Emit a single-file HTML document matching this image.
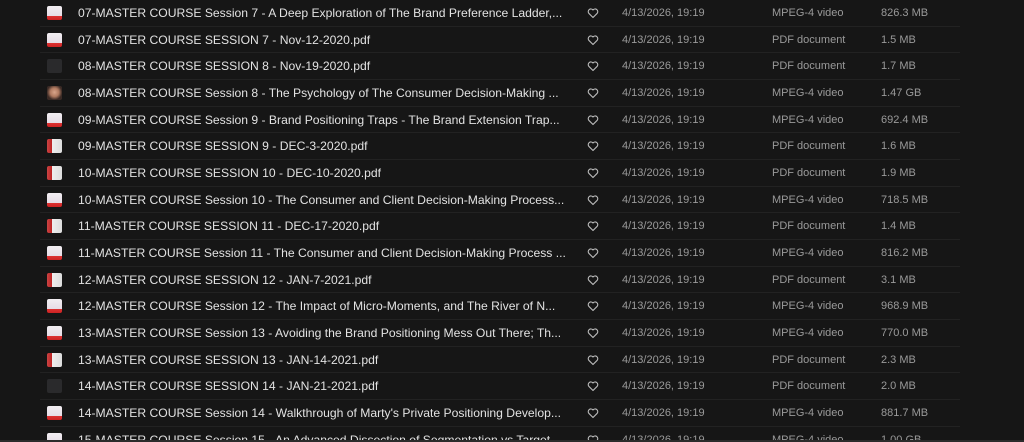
<!DOCTYPE html>
<html><head><meta charset="utf-8"><style>
*{margin:0;padding:0;box-sizing:border-box}
html,body{width:1024px;height:442px;overflow:hidden}
body{background:#161616;position:relative;font-family:"Liberation Sans",Arial,sans-serif}
.r{position:absolute;left:0;width:1024px;height:26.67px}
.r::after{content:"";position:absolute;left:40px;width:920px;bottom:0;height:1px;background:#222}
.t{position:absolute;left:47px;top:6px;width:15px;height:14px;border-radius:2px;background:linear-gradient(#f2eef2 0,#e6dde6 70%,#d33 70%,#c22 100%)}
.t.d{background:#2a2a2c}
.t.p{background:linear-gradient(90deg,#c44 0,#b22 35%,#eee 35%,#ddd 100%)}
.t.f{background:radial-gradient(circle at 50% 45%,#d9a58a 0,#b07a60 40%,#3a2a25 70%)}
.n{position:absolute;left:78px;top:6px;font-size:12.15px;color:#e2e2e2;white-space:nowrap}
.h{position:absolute;left:587px;top:7px;width:12px;height:12px}
.c{position:absolute;top:7px;font-size:11px;color:#9a9a9a;white-space:nowrap}
.a{left:622px}.b{left:772px}.s{left:881px}
.bar{position:absolute;left:0;top:440px;width:1024px;height:2px;background:#2b2b2b}
</style></head><body>
<svg width="0" height="0" style="position:absolute"><defs><symbol id="hh" viewBox="0 0 12 12"><path d="M6 10.5 L1.8 6.3 A2.4 2.4 0 0 1 6 3 A2.4 2.4 0 0 1 10.2 6.3 Z" fill="none" stroke="#bbb" stroke-width="1.1" stroke-linejoin="round"/></symbol></defs></svg>

<div class="r" style="top:0"><div class="t"></div><div class="n">07-MASTER COURSE Session 7 - A Deep Exploration of The Brand Preference Ladder,...</div><svg class="h"><use href="#hh"/></svg><div class="c a">4/13/2026, 19:19</div><div class="c b">MPEG-4 video</div><div class="c s">826.3 MB</div></div>
<div class="r" style="top:26.67px"><div class="t"></div><div class="n">07-MASTER COURSE SESSION 7 - Nov-12-2020.pdf</div><svg class="h"><use href="#hh"/></svg><div class="c a">4/13/2026, 19:19</div><div class="c b">PDF document</div><div class="c s">1.5 MB</div></div>
<div class="r" style="top:53.33px"><div class="t d"></div><div class="n">08-MASTER COURSE SESSION 8 - Nov-19-2020.pdf</div><svg class="h"><use href="#hh"/></svg><div class="c a">4/13/2026, 19:19</div><div class="c b">PDF document</div><div class="c s">1.7 MB</div></div>
<div class="r" style="top:80px"><div class="t f"></div><div class="n">08-MASTER COURSE Session 8 - The Psychology of The Consumer Decision-Making ...</div><svg class="h"><use href="#hh"/></svg><div class="c a">4/13/2026, 19:19</div><div class="c b">MPEG-4 video</div><div class="c s">1.47 GB</div></div>
<div class="r" style="top:106.67px"><div class="t"></div><div class="n">09-MASTER COURSE Session 9 - Brand Positioning Traps - The Brand Extension Trap...</div><svg class="h"><use href="#hh"/></svg><div class="c a">4/13/2026, 19:19</div><div class="c b">MPEG-4 video</div><div class="c s">692.4 MB</div></div>
<div class="r" style="top:133.33px"><div class="t p"></div><div class="n">09-MASTER COURSE SESSION 9 - DEC-3-2020.pdf</div><svg class="h"><use href="#hh"/></svg><div class="c a">4/13/2026, 19:19</div><div class="c b">PDF document</div><div class="c s">1.6 MB</div></div>
<div class="r" style="top:160px"><div class="t p"></div><div class="n">10-MASTER COURSE SESSION 10 - DEC-10-2020.pdf</div><svg class="h"><use href="#hh"/></svg><div class="c a">4/13/2026, 19:19</div><div class="c b">PDF document</div><div class="c s">1.9 MB</div></div>
<div class="r" style="top:186.67px"><div class="t"></div><div class="n">10-MASTER COURSE Session 10 - The Consumer and Client Decision-Making Process...</div><svg class="h"><use href="#hh"/></svg><div class="c a">4/13/2026, 19:19</div><div class="c b">MPEG-4 video</div><div class="c s">718.5 MB</div></div>
<div class="r" style="top:213.33px"><div class="t p"></div><div class="n">11-MASTER COURSE SESSION 11 - DEC-17-2020.pdf</div><svg class="h"><use href="#hh"/></svg><div class="c a">4/13/2026, 19:19</div><div class="c b">PDF document</div><div class="c s">1.4 MB</div></div>
<div class="r" style="top:240px"><div class="t"></div><div class="n">11-MASTER COURSE Session 11 - The Consumer and Client Decision-Making Process ...</div><svg class="h"><use href="#hh"/></svg><div class="c a">4/13/2026, 19:19</div><div class="c b">MPEG-4 video</div><div class="c s">816.2 MB</div></div>
<div class="r" style="top:266.67px"><div class="t p"></div><div class="n">12-MASTER COURSE SESSION 12 - JAN-7-2021.pdf</div><svg class="h"><use href="#hh"/></svg><div class="c a">4/13/2026, 19:19</div><div class="c b">PDF document</div><div class="c s">3.1 MB</div></div>
<div class="r" style="top:293.33px"><div class="t"></div><div class="n">12-MASTER COURSE Session 12 - The Impact of Micro-Moments, and The River of N...</div><svg class="h"><use href="#hh"/></svg><div class="c a">4/13/2026, 19:19</div><div class="c b">MPEG-4 video</div><div class="c s">968.9 MB</div></div>
<div class="r" style="top:320px"><div class="t"></div><div class="n">13-MASTER COURSE Session 13 - Avoiding the Brand Positioning Mess Out There; Th...</div><svg class="h"><use href="#hh"/></svg><div class="c a">4/13/2026, 19:19</div><div class="c b">MPEG-4 video</div><div class="c s">770.0 MB</div></div>
<div class="r" style="top:346.67px"><div class="t p"></div><div class="n">13-MASTER COURSE SESSION 13 - JAN-14-2021.pdf</div><svg class="h"><use href="#hh"/></svg><div class="c a">4/13/2026, 19:19</div><div class="c b">PDF document</div><div class="c s">2.3 MB</div></div>
<div class="r" style="top:373.33px"><div class="t d"></div><div class="n">14-MASTER COURSE SESSION 14 - JAN-21-2021.pdf</div><svg class="h"><use href="#hh"/></svg><div class="c a">4/13/2026, 19:19</div><div class="c b">PDF document</div><div class="c s">2.0 MB</div></div>
<div class="r" style="top:400px"><div class="t"></div><div class="n">14-MASTER COURSE Session 14 - Walkthrough of Marty's Private Positioning Develop...</div><svg class="h"><use href="#hh"/></svg><div class="c a">4/13/2026, 19:19</div><div class="c b">MPEG-4 video</div><div class="c s">881.7 MB</div></div>
<div class="r" style="top:426.67px"><div class="t"></div><div class="n">15-MASTER COURSE Session 15 - An Advanced Dissection of Segmentation vs Target...</div><svg class="h"><use href="#hh"/></svg><div class="c a">4/13/2026, 19:19</div><div class="c b">MPEG-4 video</div><div class="c s">1.00 GB</div></div>
<div class="bar"></div>
</body></html>
